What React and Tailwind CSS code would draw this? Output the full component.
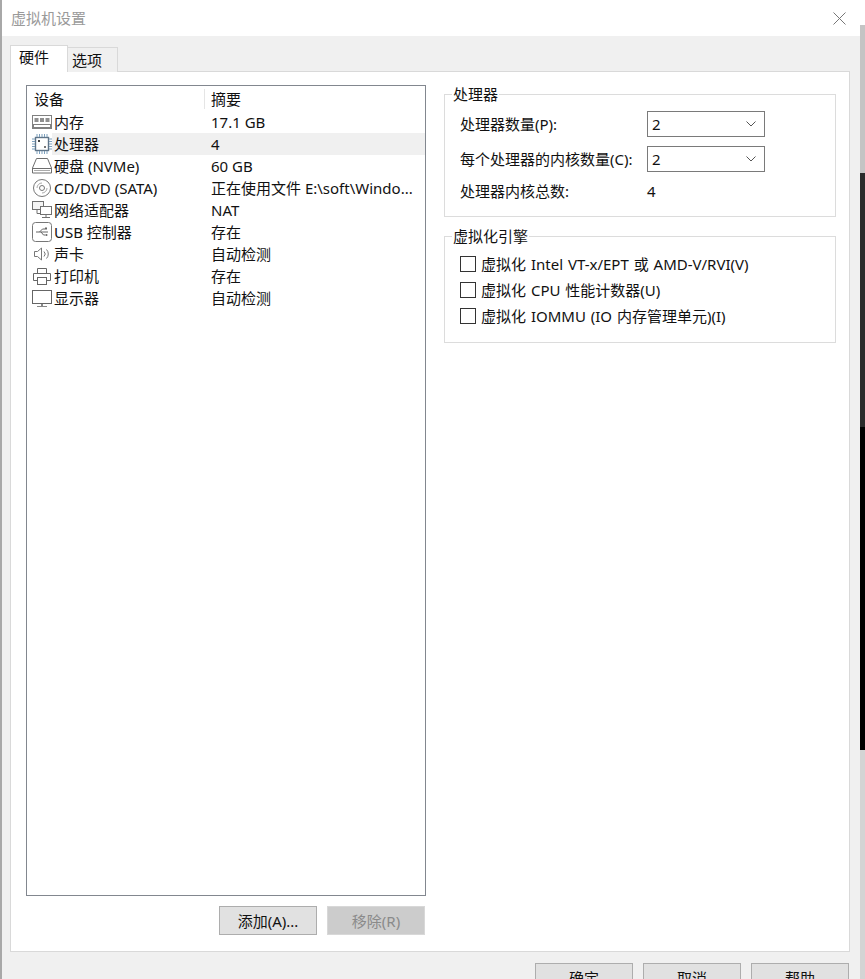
import React from 'react';

const FONT = "font-['Noto_Sans','Noto_Sans_CJK_SC',sans-serif]";

function MemoryIcon(){
  return (
    <svg width="20" height="14" viewBox="0 0 20 14" fill="none" stroke="#808080">
      <rect x="0.500" y="0.500" width="19" height="9" fill="#fff"/>
      <rect x="2.500" y="3" width="4" height="4" fill="#8f8f8f" stroke="none"/>
      <rect x="8" y="3" width="4" height="4" fill="#8f8f8f" stroke="none"/>
      <rect x="13.500" y="3" width="4" height="4" fill="#8f8f8f" stroke="none"/>
      <path d="M1 10v3h18v-3" strokeWidth="2"/>
    </svg>
  );
}

function CpuIcon(){
  return (
    <svg width="20" height="20" viewBox="0 0 20 20" fill="none">
      <rect x="3.500" y="3.500" width="13" height="13" stroke="#5f7488" strokeWidth="1.400"/>
      <path d="M5 0v3M7.500 0v3M10 0v3M12.500 0v3M15 0v3M5 17v3M7.500 17v3M10 17v3M12.500 17v3M15 17v3M0 5h3M0 7.500h3M0 10h3M0 12.500h3M0 15h3M17 5h3M17 7.500h3M17 10h3M17 12.500h3M17 15h3" stroke="#7da0bd"/>
      <rect x="6" y="6" width="2" height="2" fill="#444"/>
      <rect x="12" y="12" width="2" height="2" fill="#777"/>
    </svg>
  );
}

function DiskIcon(){
  return (
    <svg width="20" height="16" viewBox="0 0 20 16" fill="none" stroke="#6e6e6e">
      <path d="M4.500 0.500h11l4 9.500v5h-19v-5z" fill="#fff"/>
      <path d="M0.500 10.500h19"/>
      <path d="M2 12.500h16" stroke="#aaa"/>
    </svg>
  );
}

function CdIcon(){
  return (
    <svg width="20" height="20" viewBox="0 0 20 20" fill="none" stroke="#777">
      <circle cx="10" cy="10" r="8.500"/>
      <circle cx="10" cy="10" r="2.500"/>
      <path d="M5 10a5 5 0 0 1 5-5" stroke="#aaa"/>
      <path d="M15 10a5 5 0 0 1-5 5" stroke="#aaa"/>
    </svg>
  );
}

function NetworkIcon(){
  return (
    <svg width="20" height="18" viewBox="0 0 20 18" fill="none" stroke="#707070">
      <rect x="0.500" y="0.500" width="11" height="8" fill="#f4f4f4"/>
      <rect x="8.500" y="5.500" width="11" height="8" fill="#fff"/>
      <path d="M14 13.500v3M10 16.500h8M5 8.500v4h3"/>
    </svg>
  );
}

function UsbIcon(){
  return (
    <svg width="20" height="20" viewBox="0 0 20 20" fill="none" stroke="#777">
      <rect x="0.500" y="0.500" width="19" height="19" rx="3"/>
      <path d="M4 10h12M7.500 10l3-3h2.500M9 10l2.500 3h2" stroke="#666"/>
      <rect x="13" y="5.500" width="2" height="2" fill="#666" stroke="none"/>
      <circle cx="14.500" cy="13" r="1" fill="#666" stroke="none"/>
    </svg>
  );
}

function SpeakerIcon(){
  return (
    <svg width="16" height="14" viewBox="0 0 16 14" fill="none" stroke="#777">
      <path d="M0.500 4.500h3l4-3.500v12l-4-3.500h-3z"/>
      <path d="M10 4.500a3.500 3.500 0 0 1 0 5M12.500 2.500a6.500 6.500 0 0 1 0 9" />
    </svg>
  );
}

function PrinterIcon(){
  return (
    <svg width="18" height="17" viewBox="0 0 18 17" fill="none" stroke="#666">
      <path d="M4.500 5.500v-5h9v5"/>
      <path d="M4.500 12.500h-4v-7h17v7h-4"/>
      <rect x="4.500" y="9.500" width="9" height="7" fill="#fff"/>
    </svg>
  );
}

function MonitorIcon(){
  return (
    <svg width="20" height="17" viewBox="0 0 20 17" fill="none" stroke="#666">
      <rect x="0.500" y="0.500" width="19" height="13"/>
      <path d="M10 14v2" strokeWidth="2" stroke="#888"/>
      <path d="M5 16.500h10" stroke="#888"/>
    </svg>
  );
}

const devices = [
  {icon: <MemoryIcon/>, name: '内存', summary: '17.1 GB'},
  {icon: <CpuIcon/>, name: '处理器', summary: '4', selected: true},
  {icon: <DiskIcon/>, name: '硬盘 (NVMe)', summary: '60 GB'},
  {icon: <CdIcon/>, name: 'CD/DVD (SATA)', summary: '正在使用文件 E:\\soft\\Windo...'},
  {icon: <NetworkIcon/>, name: '网络适配器', summary: 'NAT'},
  {icon: <UsbIcon/>, name: 'USB 控制器', summary: '存在'},
  {icon: <SpeakerIcon/>, name: '声卡', summary: '自动检测'},
  {icon: <PrinterIcon/>, name: '打印机', summary: '存在'},
  {icon: <MonitorIcon/>, name: '显示器', summary: '自动检测'},
];

function DeviceRow({device}){
  return (
    <div className="flex h-[22px] items-center">
      <div className="flex w-[25px] shrink-0 justify-center pl-[5px]">{device.icon}</div>
      <div className={`flex h-full flex-1 items-center ${device.selected ? 'bg-[#f0f0f0]' : ''}`}>
        <div className="w-[159px] shrink-0 pl-[2px] whitespace-nowrap">{device.name}</div>
        <div className="whitespace-nowrap">{device.summary}</div>
      </div>
    </div>
  );
}

function Combo({value}){
  return (
    <div className="flex h-[26px] w-[118px] items-center justify-between border border-[#7a7a7a] bg-white pl-[4px] pr-[8px]">
      <span>{value}</span>
      <svg width="10" height="6" viewBox="0 0 10 6" fill="none" stroke="#555"><path d="M0.500 0.500L5 5l4.500-4.500"/></svg>
    </div>
  );
}

function Check({label}){
  return (
    <div className="flex h-[26px] items-center">
      <div className="mr-[5px] h-[16px] w-[16px] shrink-0 border border-[#333] bg-white"></div>
      <span className="whitespace-nowrap [word-spacing:1px]">{label}</span>
    </div>
  );
}

function Button({label, disabled}){
  return (
    <div className={`flex h-[29px] w-[98px] shrink-0 items-center justify-center border ${disabled ? 'border-[#d8d8d8] bg-[#cccccc] text-[#8a8a8a]' : 'border-[#adadad] bg-[#e1e1e1]'}`}>{label}</div>
  );
}

export default function App(){
  return (
    <div className={`flex h-[979px] w-[865px] overflow-hidden bg-white text-[15px] leading-[20px] text-[#111] ${FONT}`}>
      <div className="h-full w-[2px] shrink-0 bg-[#a8a8a8]"></div>
      <div className="flex h-full w-[858px] shrink-0 flex-col bg-[#f0f0f0]">
        <div className="flex h-[36px] shrink-0 items-center justify-between bg-white pl-[9px] pr-[14px]">
          <span className="text-[#9a9a9a]">虚拟机设置</span>
          <svg width="13" height="13" viewBox="0 0 13 13" stroke="#777" fill="none"><path d="M0.500 0.500l12 12M12.500 0.500l-12 12"/></svg>
        </div>

        <div className="relative z-10 mt-[9px] flex h-[27px] shrink-0 items-end pl-[8px]">
          <div className="flex h-[27px] w-[58px] items-center border border-b-0 border-[#d9d9d9] bg-white pb-[5px] pl-[8px]">硬件</div>
          <div className="flex h-[25px] w-[50px] items-center border border-l-0 border-b-0 border-[#d9d9d9] bg-[#f0f0f0] pl-[4px]">选项</div>
        </div>

        <div className="ml-[8px] -mt-[1px] flex h-[881px] w-[840px] shrink-0 gap-[18px] border border-[#d9d9d9] bg-white pl-[15px] pt-[13px]">
          <div className="flex w-[400px] shrink-0 flex-col">
            <div className="h-[811px] border border-[#82878f] bg-white">
              <div className="flex h-[25px] items-center">
                <div className="w-[178px] shrink-0 border-r border-[#e5e5e5] pl-[7px]">设备</div>
                <div className="pl-[6px]">摘要</div>
              </div>
              {devices.map(d => <DeviceRow key={d.name} device={d}/>)}
            </div>
            <div className="mt-[10px] flex justify-end gap-[10px] pr-[1px]">
              <Button label="添加(A)..."/>
              <Button label="移除(R)" disabled/>
            </div>
          </div>

          <div className="-mt-[1px] flex w-[392px] shrink-0 flex-col gap-[9px]">
            <fieldset className="h-[133px] border border-[#dcdcdc] px-[15px]">
              <legend className="ml-[-8px] px-[1px] leading-[20px]">处理器</legend>
              <div className="mt-[7px] flex flex-col gap-[9px]">
                <div className="flex items-center">
                  <span className="w-[187px] shrink-0">处理器数量(P):</span>
                  <Combo value="2"/>
                </div>
                <div className="flex items-center">
                  <span className="w-[187px] shrink-0 whitespace-nowrap">每个处理器的内核数量(C):</span>
                  <Combo value="2"/>
                </div>
                <div className="flex items-center">
                  <span className="w-[187px] shrink-0">处理器内核总数:</span>
                  <span>4</span>
                </div>
              </div>
            </fieldset>
            <fieldset className="h-[117px] border border-[#dcdcdc] px-[15px]">
              <legend className="ml-[-8px] px-[1px] leading-[20px]">虚拟化引擎</legend>
              <div className="mt-[5px] flex flex-col">
                <Check label="虚拟化 Intel VT-x/EPT 或 AMD-V/RVI(V)"/>
                <Check label="虚拟化 CPU 性能计数器(U)"/>
                <Check label="虚拟化 IOMMU (IO 内存管理单元)(I)"/>
              </div>
            </fieldset>
          </div>
        </div>

        <div className="mt-[11px] flex justify-end gap-[10px] pr-[11px]">
          <Button label="确定"/>
          <Button label="取消"/>
          <Button label="帮助"/>
        </div>
      </div>
      <div className="flex h-full flex-1 flex-col bg-[#d8d8d8]">
        <div className="h-[25px] bg-white"></div>
        <div className="h-[148px] bg-[#c4c4c4]"></div>
        <div className="h-[254px] bg-[#2b2b2b]"></div>
        <div className="h-[323px] bg-black"></div>
        <div className="flex-1 bg-[#d4d4d4]"></div>
      </div>
    </div>
  );
}
